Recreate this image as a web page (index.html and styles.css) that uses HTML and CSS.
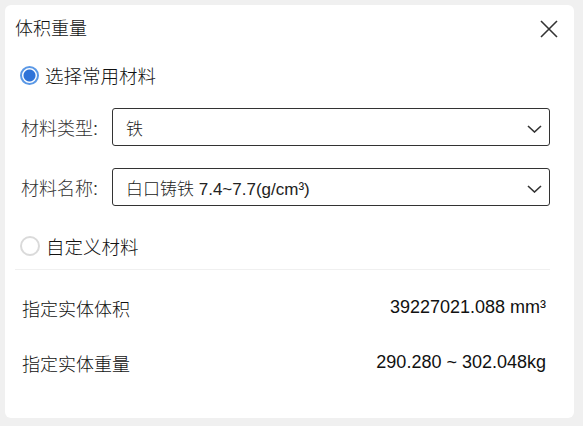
FILE: index.html
```html
<!DOCTYPE html>
<html lang="zh-CN">

<head>
    <meta charset="UTF-8">
    <title>体积重量</title>
    <link rel="stylesheet" href="styles.css">
</head>

<body>
    <section class="dialog">
        <header class="dialog-head">
            <span class="dialog-title">体积重量</span>
            <button class="close" title="关闭">
                <svg width="18" height="18" viewBox="0 0 18 18">
                    <path d="M1 1L17 17M17 1L1 17" stroke="#333" stroke-width="1.6" fill="none" />
                </svg>
            </button>
        </header>
        <div class="dialog-body">
            <label class="radio-row">
                <span class="radio checked"></span>
                <span>选择常用材料</span>
            </label>
            <div class="field">
                <span class="field-label">材料类型:</span>
                <div class="select">
                    <span>铁</span>
                    <svg class="chevron" width="15" height="8" viewBox="0 0 15 8">
                        <path d="M1 1L7.5 7L14 1" stroke="#333" stroke-width="1.6" fill="none" />
                    </svg>
                </div>
            </div>
            <div class="field">
                <span class="field-label">材料名称:</span>
                <div class="select">
                    <span>白口铸铁 <span class="num">7.4~7.7(g/cm³)</span></span>
                    <svg class="chevron" width="15" height="8" viewBox="0 0 15 8">
                        <path d="M1 1L7.5 7L14 1" stroke="#333" stroke-width="1.6" fill="none" />
                    </svg>
                </div>
            </div>
            <label class="radio-row">
                <span class="radio"></span>
                <span>自定义材料</span>
            </label>
        </div>
        <hr class="divider">
        <div class="results">
            <div class="result">
                <span>指定实体体积</span>
                <span class="num">39227021.088 mm³</span>
            </div>
            <div class="result">
                <span>指定实体重量</span>
                <span class="num">290.280 ~ 302.048kg</span>
            </div>
        </div>
    </section>
</body>

</html>
```

FILE: styles.css
```css
body {
    margin: 0;
    background-color: #f0f0f0;
    font-family: "Liberation Sans", "Noto Sans CJK SC", sans-serif;
    font-weight: 300;
    color: #111;
}

.num {
    font-weight: 400;
}

.dialog {
    margin: 5px;
    width: 569px;
    height: 413px;
    box-sizing: border-box;
    background-color: #fff;
    border-radius: 6px;
    padding: 0 24px 0 10px;
}

.dialog-head {
    display: flex;
    justify-content: space-between;
    align-items: center;
    padding-top: 10px;
    height: 28px;
}

.dialog-title {
    font-size: 18px;
    line-height: 28px;
}

.close {
    border: 0;
    background: none;
    padding: 0;
    width: 18px;
    height: 18px;
    margin-right: -8px;
    cursor: pointer;
}

.close svg {
    display: block;
}

.dialog-body {
    padding-left: 6px;
    margin-top: 14px;
}

.radio-row {
    display: flex;
    align-items: center;
    gap: 6px;
    height: 36px;
    font-size: 18.5px;
}

.radio {
    width: 16px;
    height: 16px;
    border: 2px solid #dadada;
    border-radius: 50%;
    box-sizing: content-box;
    display: inline-block;
    margin-left: -1px;
}

.radio.checked {
    border: 2px solid #5a98e6;
    width: 15px;
    height: 15px;
    background: radial-gradient(circle, #2f73d8 0 5.5px, #fff 6.5px);
}

.field {
    display: flex;
    align-items: center;
    margin-top: 15px;
}

.field + .field {
    margin-top: 22px;
}

.field-label {
    width: 91px;
    flex: none;
    font-size: 18px;
    color: #333;
}

.select {
    flex: 1;
    height: 38px;
    box-sizing: border-box;
    border: 1px solid #333;
    border-radius: 3px;
    display: flex;
    align-items: center;
    justify-content: space-between;
    padding: 0 7px 0 13px;
    font-size: 17px;
    color: #222;
}

.chevron {
    margin-top: 3px;
}

.radio-row:last-child {
    margin-top: 22px;
}

.divider {
    border: 0;
    border-top: 1px solid #f0f0f0;
    margin: 5px 0 0;
}

.results {
    padding: 10px 4px 0 7px;
}

.result {
    display: flex;
    justify-content: space-between;
    align-items: center;
    height: 55px;
    font-size: 18px;
}
```
